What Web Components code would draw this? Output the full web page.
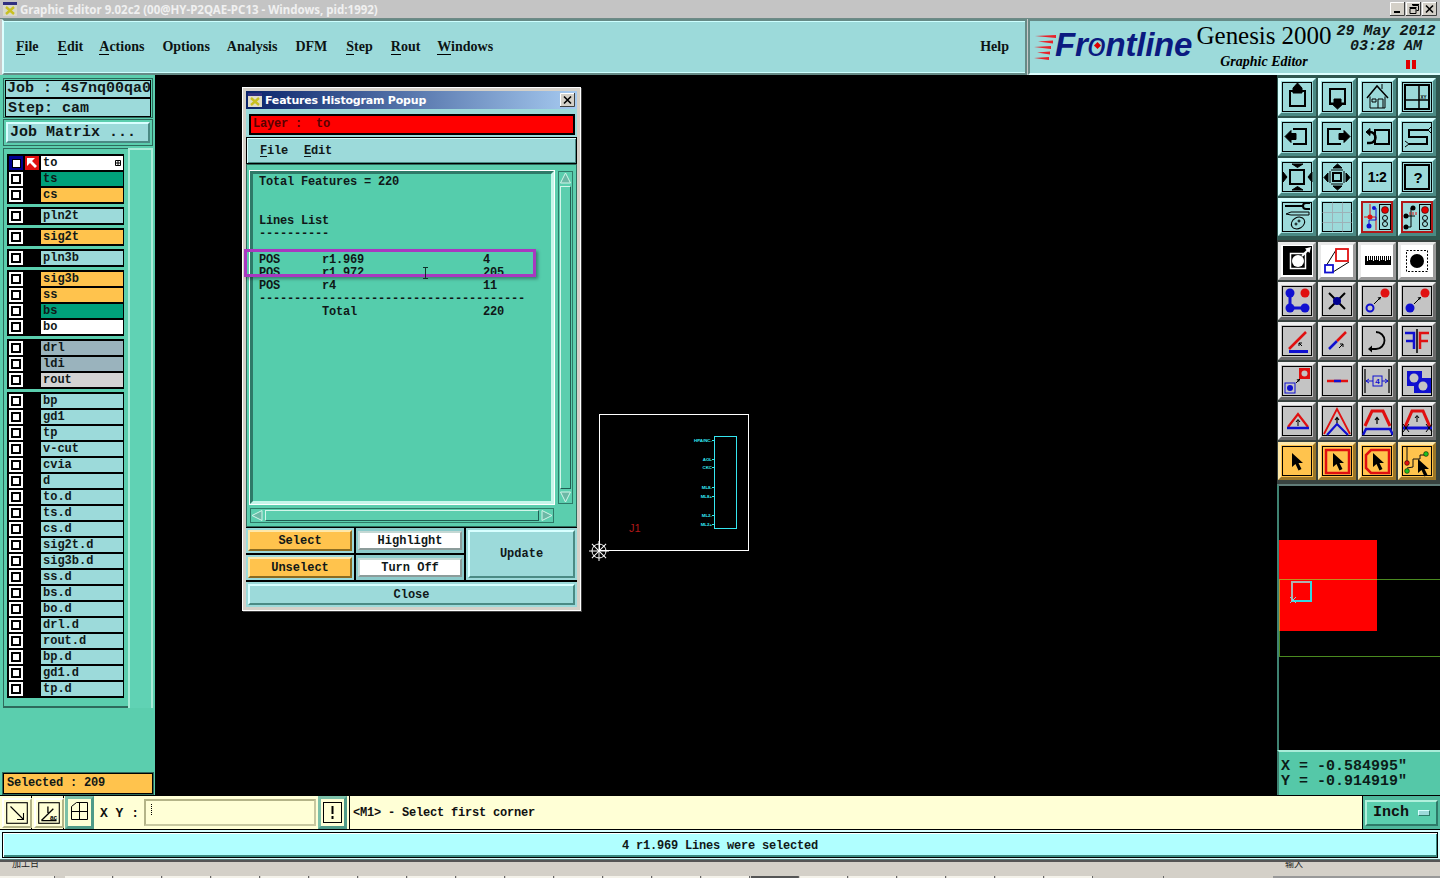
<!DOCTYPE html>
<html>
<head>
<meta charset="utf-8">
<title>Graphic Editor</title>
<style>
  html, body { margin: 0; padding: 0; height: 100%; overflow: hidden; background: #000; }
  body { display: flex; flex-direction: column; width: 1440px; height: 878px; font: bold 12px "Liberation Mono", monospace; }
  .main { display: flex; height: 720px; }
  .top { display: flex; height: 56px; background: #c9c9c9; }
</style>
</head>
<body>
<title-bar></title-bar>
<div class="top">
  <menu-bar></menu-bar>
  <logo-panel></logo-panel>
</div>
<div class="main">
  <left-panel>
    <layer-group>
      <layer-row name="to" color="#fff" active></layer-row>
      <layer-row name="ts" color="#00a07a"></layer-row>
      <layer-row name="cs" color="#ffc34d"></layer-row>
    </layer-group>
    <layer-group><layer-row name="pln2t" color="#9cdada"></layer-row></layer-group>
    <layer-group><layer-row name="sig2t" color="#ffc34d"></layer-row></layer-group>
    <layer-group><layer-row name="pln3b" color="#9cdada"></layer-row></layer-group>
    <layer-group>
      <layer-row name="sig3b" color="#ffc34d"></layer-row>
      <layer-row name="ss" color="#ffc34d"></layer-row>
      <layer-row name="bs" color="#00a07a"></layer-row>
      <layer-row name="bo" color="#fff"></layer-row>
    </layer-group>
    <layer-group>
      <layer-row name="drl" color="#9ab3bd"></layer-row>
      <layer-row name="ldi" color="#9ab3bd"></layer-row>
      <layer-row name="rout" color="#d3d3d3"></layer-row>
    </layer-group>
    <layer-group>
      <layer-row name="bp" color="#9cdada"></layer-row>
      <layer-row name="gd1" color="#9cdada"></layer-row>
      <layer-row name="tp" color="#9cdada"></layer-row>
      <layer-row name="v-cut" color="#9cdada"></layer-row>
      <layer-row name="cvia" color="#9cdada"></layer-row>
      <layer-row name="d" color="#9cdada"></layer-row>
      <layer-row name="to.d" color="#9cdada"></layer-row>
      <layer-row name="ts.d" color="#9cdada"></layer-row>
      <layer-row name="cs.d" color="#9cdada"></layer-row>
      <layer-row name="sig2t.d" color="#9cdada"></layer-row>
      <layer-row name="sig3b.d" color="#9cdada"></layer-row>
      <layer-row name="ss.d" color="#9cdada"></layer-row>
      <layer-row name="bs.d" color="#9cdada"></layer-row>
      <layer-row name="bo.d" color="#9cdada"></layer-row>
      <layer-row name="drl.d" color="#9cdada"></layer-row>
      <layer-row name="rout.d" color="#9cdada"></layer-row>
      <layer-row name="bp.d" color="#9cdada"></layer-row>
      <layer-row name="gd1.d" color="#9cdada"></layer-row>
      <layer-row name="tp.d" color="#9cdada"></layer-row>
    </layer-group>
  </left-panel>
  <graphic-canvas>
    <histogram-popup></histogram-popup>
  </graphic-canvas>
  <right-panel>
    <tool-grid slot="top">
      <tool-button tone="cyan" icon="up"></tool-button>
      <tool-button tone="cyan" icon="down"></tool-button>
      <tool-button tone="cyan" icon="home"></tool-button>
      <tool-button tone="cyan" icon="panes"></tool-button>
      <tool-button tone="cyan" icon="left"></tool-button>
      <tool-button tone="cyan" icon="right"></tool-button>
      <tool-button tone="cyan" icon="undo"></tool-button>
      <tool-button tone="cyan" icon="snake"></tool-button>
      <tool-button tone="cyan" icon="fit"></tool-button>
      <tool-button tone="cyan" icon="zoomout"></tool-button>
      <tool-button tone="cyan" icon="ratio"></tool-button>
      <tool-button tone="cyan" icon="help"></tool-button>
      <tool-button tone="cyan" icon="tools"></tool-button>
      <tool-button tone="cyan" icon="grid"></tool-button>
      <tool-button tone="cyan" icon="pcb1"></tool-button>
      <tool-button tone="cyan" icon="pcb2"></tool-button>
    </tool-grid>
    <tool-grid slot="bottom">
      <tool-button tone="white" icon="snap"></tool-button>
      <tool-button tone="white" icon="squares"></tool-button>
      <tool-button tone="white" icon="ruler"></tool-button>
      <tool-button tone="white" icon="dashed"></tool-button>
      <tool-button tone="gray" icon="dots"></tool-button>
      <tool-button tone="gray" icon="cross"></tool-button>
      <tool-button tone="gray" icon="ring"></tool-button>
      <tool-button tone="gray" icon="ball"></tool-button>
      <tool-button tone="gray" icon="angle"></tool-button>
      <tool-button tone="gray" icon="diag"></tool-button>
      <tool-button tone="gray" icon="arc"></tool-button>
      <tool-button tone="gray" icon="flip"></tool-button>
      <tool-button tone="gray" icon="pads"></tool-button>
      <tool-button tone="gray" icon="bar"></tool-button>
      <tool-button tone="gray" icon="dim"></tool-button>
      <tool-button tone="gray" icon="blob"></tool-button>
      <tool-button tone="gray" icon="tri"></tool-button>
      <tool-button tone="gray" icon="peak"></tool-button>
      <tool-button tone="gray" icon="trap"></tool-button>
      <tool-button tone="gray" icon="trapx"></tool-button>
      <tool-button tone="orange" icon="arrow"></tool-button>
      <tool-button tone="orange" icon="sqarrow"></tool-button>
      <tool-button tone="orange" icon="octarrow"></tool-button>
      <tool-button tone="orange" icon="netarrow"></tool-button>
    </tool-grid>
  </right-panel>
</div>
<command-bar></command-bar>
<status-bar>4 r1.969 Lines were selected</status-bar>
<task-strip></task-strip>

<script>
const FONT_MONO = '"Liberation Mono", monospace';

// tiny helper, every element here is just markup + styles in an open root
class ShadowBox extends HTMLElement {
  constructor() {
    super();
    this._sR = this.attachShadow({ mode: "open" });
  }
  paint(css, html) {
    this._sR.innerHTML = `<style>${css}</style>${html}`;
  }
}

class TitleBar extends ShadowBox {
  connectedCallback() {
    this.paint(`
      :host { display: flex; align-items: center; height: 18px; background: #c4c4c4; color: #f0f0f0;
        font: bold 11.5px "Noto Sans", sans-serif; border-bottom: 1px solid #6f8a86; box-sizing: content-box; }
      svg.app { margin: 0 3px 0 3px; }
      span { flex: 1; white-space: nowrap; }
      .btns { display: flex; gap: 1px; margin-right: 3px; }
      .btns svg { display: block; }
    `, `
      <svg class="app" width="14" height="14" viewBox="0 0 14 14"><rect width="14" height="14" fill="#d8d8c8"/><rect width="14" height="3" fill="#303080"/><path d="M3 5l8 7M11 5l-8 7" stroke="#c8c020" stroke-width="2.4"/></svg>
      <span>Graphic Editor 9.02c2 (00@HY-P2QAE-PC13 - Windows, pid:1992)</span>
      <div class="btns">
        ${[ '<path d="M4 10h6" stroke="#000" stroke-width="2"/>',
            '<path d="M6.5 3.5h6v5h-2M4 6.500h6v5h-6z" fill="none" stroke="#000"/><path d="M6 2.500h7M3.500 5.500h7" stroke="#000"/>',
            '<path d="M4 3.500l7 7M11 3.500l-7 7" stroke="#000" stroke-width="1.600"/>' ]
          .map(g => `<svg width="15" height="14" viewBox="0 0 15 14"><rect width="15" height="14" fill="#d4d0c8"/><path d="M.5 14V.5H15" stroke="#fff" fill="none"/><path d="M14.500 0V13.500H0" stroke="#404040" fill="none"/>${g}</svg>`).join("")}
      </div>`);
  }
}

class MenuBar extends ShadowBox {
  connectedCallback() {
    const items = [["File", 1], ["Edit", 1], ["Actions", 1], ["Options", 0], ["Analysis", 0],
      ["DFM", 0], ["Step", 1], ["Rout", 1], ["Windows", 1]];
    const gapFor = [0, 19, 16, 18, 17, 18, 19, 18, 17];
    this.paint(`
      :host { display: flex; align-items: center; box-sizing: border-box; width: 1025px; margin-left: 2px; height: 56px; flex: none;
        background: #9cdada; border: 2px solid; border-color: #668a86 #668a86 #668a86 #dff; padding: 0 16px 0 12px;
        box-shadow: inset 0 -1px 0 #cff, inset 0 1px 0 #cff;
        font: bold 14px "Liberation Serif", serif; color: #0c1414; }
      nav { display: flex; flex: 1; }
      b { font-weight: bold; }
      u { text-decoration: none; border-bottom: 1px solid #000; }
    `, `
      <nav>${items.map((m, i) => `<b style="margin-left:${gapFor[i]}px">${m[1] ? `<u>${m[0][0]}</u>${m[0].slice(1)}` : m[0]}</b>`).join("")}</nav>
      <b>Help</b>`);
  }
}

class LogoPanel extends ShadowBox {
  connectedCallback() {
    this.paint(`
      :host { display: flex; box-sizing: border-box; flex: 1; height: 56px; background: #9cdada; color: #000; margin-left: 1px;
        border: 2px solid #668a86; border-bottom-color: #dff; border-right: 0; padding: 0 0 0 4px; white-space: nowrap; }
      .stripes { margin-top: 14px; flex: none; }
      .front { font: italic bold 33px "Liberation Sans", sans-serif; color: #0b1a80; letter-spacing: -.25px; margin: 5px 0 0 -1px; width: 140px; flex: none; }
      .front i { position: relative; font-weight: normal; }
      .front i::after { content: ""; position: absolute; left: 7px; top: 17px; width: 5px; height: 5px; background: #e00000; transform: rotate(45deg); }
      .mid { width: 138px; text-align: center; flex: none; }
      .gen { font: 25px/28px "Liberation Serif", serif; margin-top: 1px; letter-spacing: -.05px; }
      .ge { font: italic bold 14px/16px "Liberation Serif", serif; margin-top: 4px; }
      .date { font: italic bold 15px/15px ${FONT_MONO}; text-align: center; width: 106px; margin-top: 3px; color: #101818; flex: none; }
      .pause { display: flex; justify-content: center; gap: 2px; margin: 6px 0 0 50px; }
      .pause s { display: block; width: 4px; height: 9px; background: #e00000; }
    `, `
      <svg class="stripes" width="22" height="26" viewBox="0 0 22 26">
        <path d="M1 1l21-1v3zM4 6.500l15-1v3zM0 12l17-1v3zM3 17.500l13-1v3zM0 23l15-1v3z" fill="#e8222a"/>
      </svg>
      <div class="front">Fr<i>o</i>ntline</div>
      <div class="mid"><div class="gen">Genesis 2000</div><div class="ge">Graphic Editor</div></div>
      <div class="date">29 May 2012<br>03:28 AM<div class="pause"><s></s><s></s></div></div>`);
  }
}

class LayerRow extends ShadowBox {
  connectedCallback() {
    const active = this.hasAttribute("active");
    this.paint(`
      :host { display: flex; height: 16px; font: bold 12px/14px ${FONT_MONO}; color: #101818; }
      .chk { box-sizing: border-box; width: 14px; height: 14px; background: #000; border: 2px solid #fff; display: grid; place-items: center; }
      .chk::after { content: ""; width: 6px; height: 6px; background: #fff; }
      .chk.on { border: 3px solid #000090; background: #000090; }
      .chk.on::after { width: 7px; height: 7px; background: #fff; box-shadow: 0 0 0 1px #000; }
      .mark { width: 14px; height: 14px; margin: 0 2px; display: block; }
      .fill { flex: 1; height: 14px; padding-left: 2px; margin-right: 1px; display: flex; justify-content: space-between; }
      .fill svg { margin: 4px 2px 0 0; }
    `, `
      <span class="chk ${active ? "on" : ""}"></span>
      ${active
        ? `<svg class="mark" viewBox="0 0 14 14"><rect width="14" height="14" fill="#e01010"/><path d="M2 2h8l-3 3 5 5-2 2-5-5-3 3z" fill="#fff"/></svg>`
        : `<span class="mark"></span>`}
      <span class="fill" style="background:${this.getAttribute("color")}">${this.getAttribute("name")}${active
        ? `<svg width="6" height="6" viewBox="0 0 6 6"><path d="M.5.500h5v5h-5zM3 .500v5M.5 3h5" fill="none" stroke="#000"/></svg>` : ""}</span>`);
  }
}

class LayerGroup extends ShadowBox {
  connectedCallback() {
    this.paint(`:host { display: block; background: #000; padding: 2px 0 0 2px; margin-bottom: 3px; }`, `<slot></slot>`);
  }
}

class LeftPanel extends ShadowBox {
  connectedCallback() {
    this.paint(`
      :host { display: flex; flex-direction: column; width: 155px; background: #5bceae; box-sizing: border-box; flex: none; color: #101818; }
      .job { margin: 3px 2px 0 3px; background: #5bceae; border: 1px solid #2e6a5c; padding: 1px 1px 0; font: bold 15px/16px ${FONT_MONO}; white-space: pre; }
      .job div { background: #9cdada; border: 1px solid #000; height: 16px; padding-left: 1px; overflow: hidden; }
      .job div + div { height: 17px; margin-top: 0; padding-left: 2px; line-height: 19px; }
      .matrix { margin: 1px 2px 0 3px; border: 1px solid #2e6a5c; padding: 2px; height: 21px; background: #5bceae; }
      .matrix div { height: 21px; box-sizing: border-box; background: #9cdada; border: 2px solid; border-color: #d8ffff #4a8a84 #4a8a84 #d8ffff;
        font: bold 15px/17px ${FONT_MONO}; padding-left: 2px; white-space: pre; }
      .list { display: flex; margin: 2px 2px 0 0; flex: none; }
      .layers { box-sizing: border-box; width: 125px; margin-left: 3px; padding: 5px 4px 5px 3px; border: 1px solid #2e6a5c; border-width: 1px 0 2px 1px; background: #5bceae; }
      .track { flex: 1; background: #60d2b4; border: 2px solid #a8ecd8; border-bottom: 0; }
      .spacer { flex: 1; }
      .selected { margin: 0 2px 1px 3px; box-sizing: border-box; height: 21px; border: 1px solid #000; outline: 1px solid #2e6a5c; background: #ffc34d;
        font: bold 12px/19px ${FONT_MONO}; padding-left: 3px; letter-spacing: -.2px; white-space: pre; }
    `, `
      <div class="job"><div>Job : 4s7nq00qa0</div><div>Step: cam</div></div>
      <div class="matrix"><div>Job Matrix ...</div></div>
      <div class="list"><div class="layers"><slot></slot></div><div class="track"></div></div>
      <div class="spacer"></div>
      <div class="selected">Selected : 209</div>`);
  }
}

class GraphicCanvas extends ShadowBox {
  connectedCallback() {
    const pins = [["HPA/NC-", 440], ["AOL", 459], ["CKC", 467], ["ML8-", 487], ["ML8+", 496], ["ML2-", 515], ["ML2+", 524]];
    const spokes = [0, 45, 90, 135].map(a => `<line x1="-10" x2="10" transform="rotate(${a})"/>`).join("");
    this.paint(`
      :host { display: block; position: relative; flex: 1; background: #000; }
      svg { position: absolute; left: 0; top: 0; width: 100%; height: 100%; }
      text { font: bold 4.400px "Liberation Sans", sans-serif; fill: #35f0f8; text-anchor: end; }
      text.j { font: 11px "Liberation Sans", sans-serif; fill: #b01818; text-anchor: start; }
    `, `
      <svg viewBox="155 75 1122 720">
        <rect x="599.500" y="414.500" width="149" height="136" fill="none" stroke="#fff"/>
        <rect x="714.500" y="436.500" width="22" height="92" fill="none" stroke="#35e6f0"/>
        ${pins.map(p => `<text x="712" y="${p[1] + 2}">${p[0]}</text><line x1="712" x2="714" y1="${p[1]}.500" y2="${p[1]}.500" stroke="#35e6f0"/>`).join("")}
        <text class="j" x="629" y="532">J1</text>
        <g transform="translate(599 551)" fill="none" stroke="#fff"><circle r="7"/>${spokes}</g>
      </svg>
      <slot></slot>`);
  }
}

class ScrollBar extends ShadowBox {
  connectedCallback() {
    const v = this.getAttribute("orient") === "v";
    const arrow = d => `<svg width="15" height="15" viewBox="0 0 15 15"><path d="${d}" fill="#6db8a6" stroke="#d2f6ea"/></svg>`;
    this.paint(`
      :host { display: flex; flex-direction: ${v ? "column" : "row"}; ${v ? "width" : "height"}: 15px; background: #5bceae;
        outline: 1px solid #2e7a68; outline-offset: -1px; }
      svg { display: block; flex: none; }
      .thumb { flex: 1; margin: ${v ? "0 2px" : "2px 0"}; border: 1px solid #1f5e52; border-color: #d2f6ea #1f5e52 #1f5e52 #d2f6ea; background: #5bceae; }
    `, v
      ? arrow("M7.500 2l5 10h-10z") + `<div class="thumb"></div>` + arrow("M7.500 13l5-10h-10z")
      : arrow("M2 7.500l10-5v10z") + `<div class="thumb"></div>` + arrow("M13 7.500l-10-5v10z"));
  }
}

class MotifButton extends ShadowBox {
  connectedCallback() {
    const tone = this.getAttribute("tone") || "cyan";
    const t = { cyan: ["#9cdada", "#d8ffff", "#4a8a84"], orange: ["#ffc34d", "#ffe8a8", "#8a6a20"], white: ["#fff", "#c4d8d4", "#8c9c9a"] }[tone];
    this.paint(`
      :host { display: flex; align-items: center; justify-content: center; box-sizing: border-box; height: 100%;
        background: ${t[0]}; border: 2px solid; border-color: ${t[1]} ${t[2]} ${t[2]} ${t[1]}; font: bold 12px ${FONT_MONO}; color: #101818; white-space: pre; }
    `, `<slot></slot>`);
  }
}

class HistogramPopup extends ShadowBox {
  connectedCallback() {
    const report = `Total Features = 220


Lines List
----------

POS      r1.969                 4
POS      r1.972                 205
POS      r4                     11
--------------------------------------
         Total                  220`;
    this.paint(`
      :host { position: absolute; left: 87px; top: 12px; width: 339px; height: 524px; box-sizing: border-box; display: flex; flex-direction: column;
        background: #d4d0c8; border: 4px solid #d4d0c8; outline: 1px solid #fff; outline-offset: -1px;
        box-shadow: 1px 1px 0 #404040; color: #101818; }
      .title { display: flex; align-items: center; height: 18px; flex: none; background: linear-gradient(90deg, #0a246a, #a6caf0); color: #fff;
        font: bold 11px "DejaVu Sans", sans-serif; letter-spacing: -.2px; }
      .title svg { display: block; flex: none; }
      .title span { flex: 1; margin-left: 3px; }
      .layer { flex: none; height: 28px; box-sizing: border-box; background: #9cdada; padding: 5px 2px 2px 3px; }
      .layer div { height: 21px; box-sizing: border-box; background: #ff0000; border: 2px solid #000; font: bold 12px/17px ${FONT_MONO}; color: #5a0000; white-space: pre; padding-left: 2px; letter-spacing: -.2px; }
      .menu { flex: none; height: 27px; box-sizing: border-box; background: #9cdada; border: 1px solid #000; box-shadow: inset 1px 1px 0 #d8ffff, inset -1px -1px 0 #4a8a84;
        display: flex; align-items: center; gap: 16px; padding-left: 13px; font: bold 12px ${FONT_MONO}; letter-spacing: -.2px; }
      .menu u { text-decoration-thickness: 1px; text-underline-offset: 2px; }
      .body { flex: none; height: 363px; box-sizing: border-box; background: #5bceae; padding: 6px 3px 3px 3px; border: 1px solid #2e6a5c;
        display: grid; grid-template-columns: 304px 15px; grid-template-rows: 333px 15px; gap: 4px; }
      pre { margin: 0; box-sizing: border-box; background: #55cdac; border: 3px solid; border-color: #2e7a68 #c6f6ea #c6f6ea #2e7a68; outline: 1px solid #fff;
        padding: 2px 0 0 6px; font: bold 12px/13px ${FONT_MONO}; letter-spacing: -.2px; overflow: hidden; }
      .btns { flex: none; display: grid; grid-template-columns: 108px 108px 1fr; grid-template-rows: 25px 25px 25px; gap: 2px; background: #000; padding-top: 1px; height: 80px; box-sizing: border-box; }
      .btns > div { background: #9cdada; padding: 2px; box-sizing: border-box; }
      .btns > .w { padding: 3px 2px; background: #8ccaca; }
      .upd { grid-column: 3; grid-row: 1 / span 2; }
      .cl { grid-column: 1 / span 3; }
      .mark { position: absolute; left: -2px; top: 158px; width: 292px; height: 28px; box-sizing: border-box; border: 3px solid #a838c0;
        box-shadow: 2px 2px 3px rgba(0,0,0,.35); }
      .beam { position: absolute; left: 176px; top: 176px; }
    `, `
      <div class="title">
        <svg width="14" height="14" viewBox="0 0 14 14" style="margin-left:2px"><rect width="14" height="14" fill="#e0dcc8"/><rect width="14" height="3" fill="#303080"/><path d="M3 5l8 7M11 5l-8 7" stroke="#c8c020" stroke-width="2.400"/></svg>
        <span>Features Histogram Popup</span>
        <svg width="15" height="14" viewBox="0 0 15 14" style="margin-right:2px"><rect width="15" height="14" fill="#d4d0c8"/><path d="M.5 14V.5H15" stroke="#fff" fill="none"/><path d="M14.500 0V13.500H0" stroke="#404040" fill="none"/><path d="M4 3.500l7 7M11 3.500l-7 7" stroke="#000" stroke-width="1.600"/></svg>
      </div>
      <div class="layer"><div>Layer :  to</div></div>
      <div class="menu"><span><u>F</u>ile</span><span><u>E</u>dit</span></div>
      <div class="body">
        <pre>${report}</pre>
        <scroll-bar orient="v"></scroll-bar>
        <scroll-bar orient="h"></scroll-bar>
      </div>
      <div class="btns">
        <div><motif-button tone="orange">Select</motif-button></div>
        <div class="w"><motif-button tone="white">Highlight</motif-button></div>
        <div class="upd"><motif-button>Update</motif-button></div>
        <div><motif-button tone="orange">Unselect</motif-button></div>
        <div class="w"><motif-button tone="white">Turn Off</motif-button></div>
        <div class="cl"><motif-button>Close</motif-button></div>
      </div>
      <div class="mark"></div>
      <svg class="beam" width="7" height="12" viewBox="0 0 7 12"><path d="M1 .5h5M1 11.500h5M3.500 0v12" stroke="#10322c" fill="none"/></svg>`);
  }
}

const R = "#e01010", B = "#1010d0";
const ptr = (x, y) => `<path transform="translate(${x} ${y})" d="M0 0v14l3.500-3 3 6.500 3-1.500-3-6h4.500z" fill="#000" stroke="none"/>`;
const tiny = (x1, y1, x2, y2) => `<path d="M${x1} ${y1}L${x2} ${y2}" stroke="#000"/><path d="M${x2} ${y2}l-3.500 .5 2.500 2.500z" fill="#000" stroke="none"/>`;
const signal = `<rect x="21.500" y="6.500" width="11" height="25" fill="#9cdada" stroke="#000"/><circle cx="27" cy="12" r="3.500" fill="#e00000" stroke="#000" stroke-width=".5"/><circle cx="27" cy="20" r="2.500"/><circle cx="27" cy="26" r="2.500"/>`;
const redFrame = `<rect x="3.500" y="3.500" width="31" height="31" fill="none" stroke="#b01818" stroke-width="3"/>`;
const ICONS = {
  up: `<rect x="12" y="13" width="15" height="15" stroke-width="2"/><path d="M19.500 5l4.500 5v5h-9v-5z" fill="#000"/>`,
  down: `<rect x="12" y="11" width="15" height="15" stroke-width="2"/><path d="M16 21h7v4h3l-6.500 6-6.500-6h3z" fill="#000"/>`,
  home: `<path d="M24 6v5"/><path d="M12 18.500V30h15V18.500M20 30v-9h5v9M14 21h4v3h-4z"/><path d="M9 20L19 8l11 12" stroke-width="1.500"/>`,
  panes: `<rect x="7" y="7" width="24" height="24" stroke-width="2"/><path d="M21 7v24M7 22h24" stroke-width="1.500"/><text x="22.500" y="20.500" font-size="4.500" font-family="Liberation Sans" fill="#000" stroke="none">XY</text>`,
  left: `<path d="M15 11h13v15H15" stroke-width="2"/><path d="M7 18.500l6-6v3h5v6h-5v3z" fill="#000"/>`,
  right: `<path d="M23 11H10v15h13" stroke-width="2"/><path d="M32 18.500l-6-6v3h-5v6h5v3z" fill="#000"/>`,
  undo: `<rect x="17" y="12" width="14" height="14" stroke-width="2"/><path d="M11 14h1a5.500 5.500 0 010 11H9" stroke-width="2.500"/><path d="M8 14l4-3.500v7z" fill="#000"/>`,
  snake: `<path d="M30 12H11v7h18v7H11" stroke-width="2"/><path d="M30 12l3-3M30 12l3 3M11 26l-4-3M11 26l-4 3"/>`,
  fit: `<rect x="12" y="12" width="14" height="14" stroke-width="2"/><path d="M14 6h11l-5.500 3.500zM14 32h11l-5.500-3.500zM5 14v10l4-5zM34 14v10l-4-5z" fill="#000"/>`,
  zoomout: `<rect x="15" y="15" width="8" height="8" stroke-width="2"/><path d="M15 10h9l-4.500-4zM15 28h9l-4.500 4zM10 15v9l-4-4.500zM28 15v9l4-4.500z" fill="#000"/><path d="M13 12h12M13 26h12M12 13v12M26 13v12"/>`,
  ratio: `<text x="19" y="24" text-anchor="middle" font-size="14" font-weight="bold" font-family="Liberation Sans" fill="#000" stroke="none" letter-spacing="-.5">1:2</text>`,
  help: `<rect x="7" y="7" width="24" height="24" stroke-width="2"/><text x="20" y="25" text-anchor="middle" font-size="15" font-weight="bold" font-family="Liberation Sans" fill="#000" stroke="none">?</text>`,
  tools: `<path d="M7 8h18" stroke-width="2"/><path d="M32 5h-4a3 3 0 000 6h4" stroke-width="2"/><path d="M8 16l5-2h18v3H13z"/><ellipse cx="20" cy="25" rx="7" ry="5.500" transform="rotate(-30 20 25)"/><circle cx="18" cy="26" r="1"/><circle cx="21" cy="23" r="1"/>`,
  grid: `<path d="M4.500 14.500h29M4.500 24.500h29M14.500 4.500v29M24.500 4.500v29" stroke="#9db2b8"/>`,
  pcb1: `${redFrame}<path d="M6 19h12v13M12 6v13" stroke="#e01010"/><path d="M18 10v12H11v6" stroke="#1010d0"/><circle cx="12" cy="19" r="2.500" fill="${R}" stroke="none"/><circle cx="16" cy="10" r="2" fill="${B}" stroke="none"/><circle cx="11" cy="28" r="2.500" fill="${B}" stroke="none"/>${signal}`,
  pcb2: `${redFrame}<path d="M13 10v19H8M8 18h9" stroke="#000"/><path d="M12 17v-3M15 17v-3M18 17v-3" stroke="#e01010"/><circle cx="15" cy="10" r="2.500" fill="#000" stroke="none"/><circle cx="8" cy="18" r="2.500" fill="#000" stroke="none"/><circle cx="8" cy="29" r="2.500" fill="#000" stroke="none"/>${signal}`,
  snap: `<rect x="5" y="4" width="29" height="29" fill="#000" stroke="none"/><rect x="12.500" y="11.500" width="15" height="15" stroke="#fff" stroke-width="1.500"/><circle cx="20" cy="19" r="6" fill="#fff" stroke="none"/><path d="M24 14L31 7" stroke="#fff" stroke-width="2"/><path d="M33 5l-6 1.500 4.500 4.500z" fill="#fff" stroke="none"/>`,
  squares: `<path d="M8 24L18 8M15 30l16-10"/><rect x="7" y="23" width="8" height="7.500" stroke="${B}" stroke-width="1.800" fill="#fff"/><rect x="18" y="7" width="12" height="12" stroke="${R}" stroke-width="1.800" fill="#fff"/>`,
  ruler: `<rect x="7" y="14" width="26" height="9" fill="#000" stroke="none"/><path d="M9.500 14v5M11.500 14v4M13.500 14v4M15.500 14v5M17.500 14v4M19.500 14v4M21.500 14v5M23.500 14v4M25.500 14v4M27.500 14v5M29.500 14v4M31.500 14v4" stroke="#fff"/>`,
  dashed: `<rect x="8.500" y="8.500" width="21" height="21" stroke-dasharray="2 1.500"/><circle cx="19" cy="19" r="7" fill="#000" stroke="none"/>`,
  dots: `<path d="M12 11v15h15" stroke="${B}" stroke-width="3"/><circle cx="12" cy="11" r="4.500" fill="${B}" stroke="none"/><circle cx="12" cy="26" r="4.500" fill="${B}" stroke="none"/><circle cx="27" cy="26" r="4.500" fill="${B}" stroke="none"/><circle cx="27" cy="11" r="4.500" fill="${R}" stroke="none"/>`,
  cross: `<path d="M11 11l16 16M27 11L11 27" stroke-width="2"/><circle cx="19" cy="19" r="4" fill="#000090" stroke="none"/>`,
  ring: `<circle cx="12" cy="26" r="3.500" stroke="${B}" stroke-width="2"/>${tiny(16, 22, 23, 15)}<circle cx="27" cy="11" r="4.500" fill="${R}" stroke="none"/>`,
  ball: `<circle cx="12" cy="26" r="4.500" fill="${B}" stroke="none"/>${tiny(16, 22, 23, 15)}<circle cx="27" cy="11" r="4.500" fill="${R}" stroke="none"/>`,
  angle: `<path d="M11 27L28 10" stroke="${R}" stroke-width="2.500"/><path d="M11 29.500h19" stroke="${B}" stroke-width="3"/><path d="M24 24l-3-3M21 21v3M21 21h3"/>`,
  diag: `<path d="M11 27l8-8" stroke="${B}" stroke-width="2.500"/><path d="M19 19l9-9" stroke="${R}" stroke-width="2.500"/><path d="M21 26l4-4M25 22h-3M25 22v3"/>`,
  arc: `<path d="M18 10a8 8 0 010 17h-4" stroke-width="1.800"/><path d="M14 23.500v7l-4-3.500z" fill="#000" stroke="none"/>`,
  flip: `<path d="M19 7v24" stroke-width="1.500"/><path d="M22 27V11h9M22 19h8" stroke="${R}" stroke-width="2.500"/><path d="M16 27V11H7M16 19H8" stroke="${B}" stroke-width="2.500"/>`,
  pads: `<rect x="21" y="6" width="11" height="11" fill="${R}" stroke="none"/><circle cx="26.500" cy="11.500" r="3" fill="#c4c4c4" stroke="none"/><rect x="7" y="21" width="10" height="10" stroke="${B}"/><circle cx="12" cy="26" r="3" fill="${B}" stroke="none"/>${tiny(18, 21, 22, 17)}`,
  bar: `<path d="M9 19h21" stroke="${R}" stroke-width="2.500"/><path d="M16 19h7" stroke="${B}" stroke-width="2.500"/>`,
  dim: `<path d="M7 7v24M31 7v24" stroke-width="1.200"/><path d="M8 19h22M8 19l3-2M8 19l3 2M30 19l-3-2M30 19l-3 2" stroke="${B}"/><rect x="15" y="14" width="9" height="10" fill="#c4c4c4" stroke="${B}"/><text x="19.500" y="22" text-anchor="middle" font-size="8" font-family="Liberation Sans" fill="${B}" stroke="none">4</text>`,
  blob: `<path d="M9 9h15v7h9v15H16v-7H9z" fill="${B}" stroke="none"/><circle cx="16" cy="16" r="4.500" fill="#c4c4c4" stroke="none"/><circle cx="25" cy="24" r="4.500" fill="#c4c4c4" stroke="none"/>`,
  tri: `<path d="M10 25L20 12l10 13" stroke="${R}" stroke-width="2.200"/><path d="M9 26h22" stroke="${B}" stroke-width="2.500"/><path d="M20 24v-6M18 20l2-2.500 2 2.500"/>`,
  peak: `<path d="M6 32L19 7l13 25" stroke="${R}" stroke-width="1.800"/><path d="M9 33l10-11 11 11" stroke="${B}" stroke-width="2.200"/><path d="M19 21v-5M17 18l2-2.500 2 2.500" stroke-width="1.200"/>`,
  trap: `<path d="M7 24l7-15h11l7 15" stroke="${R}" stroke-width="3"/><path d="M5 33l3-6h24l3 6" stroke="${B}" stroke-width="2.500"/><path d="M19 22v-6M17 18l2-2.500 2 2.500" stroke-width="1.200"/>`,
  trapx: `<path d="M7 25l7-16h11l7 16" stroke="${R}" stroke-width="3"/><path d="M5 26h29" stroke="${B}" stroke-width="3"/><path d="M5 22l6 8M11 22l-6 8M28 22l6 8M34 22l-6 8M19 20v-6M17 16l2-2.500 2 2.500"/>`,
  arrow: ptr(14, 11),
  sqarrow: `<rect x="8" y="8" width="23" height="23" stroke="${R}" stroke-width="2.500"/>${ptr(15, 11)}`,
  octarrow: `<path d="M13 8h18v23H13l-5-5V13z" stroke="${R}" stroke-width="2.500"/>${ptr(15, 11)}`,
  netarrow: `<path d="M9 5v15h0M9 26l6-1v-8h7v-4h6" stroke="#111"/><circle cx="9" cy="21" r="2.400" fill="${R}" stroke="#000" stroke-width=".5"/><circle cx="9" cy="29" r="2.400" fill="#20c020" stroke="#000" stroke-width=".5"/><circle cx="28" cy="12" r="2.400" fill="#20c020" stroke="#000" stroke-width=".5"/>${ptr(20, 17)}`,
};
const TONES = {
  cyan: ["#9cdada", "#d8ffff", "#4a8a84"],
  gray: ["#c4c4c4", "#f0f0f0", "#6a6a6a"],
  orange: ["#ffc34d", "#ffe8a8", "#9a7628"],
  white: ["#fff", "#e8e8e8", "#9a9a9a"],
};

class ToolButton extends ShadowBox {
  connectedCallback() {
    const t = TONES[this.getAttribute("tone")];
    const icon = this.getAttribute("icon");
    const frame = (icon === "snap" || icon === "squares" || icon === "ruler" || icon === "dashed" || icon.startsWith("pcb")) ? ""
      : `<rect x="4.500" y="4.500" width="29" height="29" stroke="#000"/>`;
    this.paint(`
      :host { display: block; width: 38px; height: 38px; box-sizing: border-box; background: ${t[0]}; border: 3px solid; border-color: ${t[1]} ${t[2]} ${t[2]} ${t[1]}; }
      svg { display: block; }
    `, `<svg width="32" height="32" viewBox="3 3 32 32" fill="none" stroke="#000">${frame}${ICONS[icon]}</svg>`);
  }
}

class ToolGrid extends ShadowBox {
  connectedCallback() {
    this.paint(`:host { display: grid; grid-template-columns: repeat(4, 38px); gap: 2px; padding: 0 0 0 1px; }`, `<slot></slot>`);
  }
}

class RightPanel extends ShadowBox {
  connectedCallback() {
    this.paint(`
      :host { display: flex; flex-direction: column; width: 163px; flex: none; background: #2f5750; box-sizing: border-box; font: bold 15px/15px ${FONT_MONO}; color: #0c1c18; }
      .a { padding: 3px 0 4px 0; background: #2f5750; }
      .b { padding: 2px 0 4px 0; background: #38423f; }
      .map { display: block; height: 266px; background: #000; border-left: 2px solid #3f8272; border-top: 2px solid #607c78; box-sizing: border-box; flex: none; }
      .xy { flex: 1; background: #55c8a8; border-top: 2px solid #a8ecd8; border-left: 2px solid #3f8272; padding: 7px 0 0 2px; white-space: pre; }
    `, `
      <div class="a"><slot name="top"></slot></div>
      <div class="b"><slot name="bottom"></slot></div>
      <svg class="map" width="163" viewBox="1279 486 161 264" preserveAspectRatio="none">
        <rect x="1279" y="540" width="98" height="91" fill="#ff0000"/>
        <path d="M1279 579.500H1440M1279 656.500H1440M1279.500 579V657" stroke="#4a8a20" fill="none"/>
        <path d="M1279 579.500h98M1279.500 579v52" stroke="#c09020" fill="none"/>
        <path d="M1292 601v-19h19" stroke="#b0b0b0" stroke-width="2" fill="none"/>
        <path d="M1311 581v20h-19" stroke="#35d6e0" stroke-width="2" fill="none"/>
        <path d="M1290 597l6 6M1296 597l-6 6" stroke="#7ad6e0"/>
      </svg>
      <div class="xy">X = -0.584995"
Y = -0.914919"</div>`);
  }
}

class CommandBar extends ShadowBox {
  connectedCallback() {
    const box = `<rect x="5.500" y="5.500" width="19" height="19" fill="none" stroke="#000"/>`;
    this.paint(`
      :host { display: flex; height: 35px; box-sizing: border-box; background: #ffffd6; border-top: 1px solid #000; border-bottom: 1px solid #000; color: #101010; font: bold 12px ${FONT_MONO}; letter-spacing: -.2px; white-space: pre; }
      .ib { width: 31px; margin-left: 1px; border-right: 1px solid #000; box-sizing: border-box; padding: 2px 1px 0 1px; flex: none; }
      .ib svg { display: block; border: 2px solid; border-color: #fff #b4b488 #b4b488 #fff; }
      .teal { flex: none; box-sizing: border-box; width: 29px; height: 33px; background: #ffffd6; border: 3px solid; border-color: #7cc0a8 #4f9a88 #4f9a88 #7cc0a8; }
      .teal svg { display: block; }
      .xy { width: 44px; padding: 10px 0 0 4px; font-size: 13px; letter-spacing: 0; flex: none; box-sizing: content-box; }
      .input { flex: none; box-sizing: border-box; width: 172px; height: 27px; margin: 3px 2px 0 0; background: #ffffd6; border: 2px solid; border-color: #b4b488 #c8c8a0 #c8c8a0 #b4b488; }
      .input i { display: block; width: 0; height: 11px; margin: 3px 0 0 5px; border-left: 1px dotted #000; }
      .msg { flex: 1; padding: 10px 0 0 3px; border-left: 1px solid #000; margin-left: 2px; }
      .inch { flex: none; width: 78px; border-left: 1px solid #000; background: #4fb89c; padding: 2px; box-sizing: border-box; }
      .inch div { height: 26px; margin-top: 2px; box-sizing: border-box; background: #5bceae; border: 2px solid; border-color: #b0f0dc #2e7a68 #2e7a68 #b0f0dc; display: flex; align-items: center; justify-content: space-between;
        font: bold 15px ${FONT_MONO}; letter-spacing: 0; padding: 0 6px 1px 6px; }
      .inch s { display: block; width: 12px; height: 6px; background: #9cdada; border: 1px solid; border-color: #d8ffff #2e7a68 #2e7a68 #d8ffff; box-sizing: border-box; }
    `, `
      <div class="ib"><svg width="26" height="26" viewBox="3 3 24 24" style="box-sizing:content-box">${box}<path d="M9 9l12 12M21 15v6h-6M9 9" fill="none" stroke="#000"/></svg></div>
      <div class="ib"><svg width="26" height="26" viewBox="3 3 24 24">${box}<path d="M8 22l11-11M8 22h14M14 9v6" fill="none" stroke="#000" stroke-width="1.200"/><text x="16" y="21" font-size="6" font-family="Liberation Sans" fill="#000">ac</text></svg></div>
      <div class="teal" style="margin:0 2px 0 1px"><svg width="23" height="27" viewBox="0 0 23 27"><path d="M3.500 7.500l5-4h11v17h-16zM3.500 12.500h16M11.500 3.500v17" fill="none" stroke="#000"/></svg></div>
      <div class="xy">X Y :</div>
      <div class="input"><i></i></div>
      <div class="teal"><svg width="23" height="27" viewBox="0 0 23 27"><rect x="2.500" y="3.500" width="18" height="20" fill="none" stroke="#000"/><path d="M11.500 7v8" stroke="#000" stroke-width="2"/><rect x="10.500" y="17" width="2" height="3"/></svg></div>
      <div class="msg">&lt;M1&gt; - Select first corner</div>
      <div class="inch"><div>Inch<s></s></div></div>`);
  }
}

class StatusBar extends ShadowBox {
  connectedCallback() {
    this.paint(`
      :host { display: block; height: 30px; box-sizing: border-box; background: #d8ffff; padding: 2px 2px 1px 2px; border-bottom: 1px solid #5a7a76; }
      div { height: 26px; box-sizing: border-box; border: 1px solid #000; background: #b0ffff; box-shadow: inset 1px 1px 0 #fff, inset -1px -2px 0 #3a8a80;
        text-align: center; font: bold 12px/27px ${FONT_MONO}; letter-spacing: -.2px; color: #101818; overflow: hidden; }
    `, `<div><slot></slot></div>`);
  }
}

class TaskStrip extends ShadowBox {
  connectedCallback() {
    this.paint(`
      :host { display: block; position: relative; height: 18px; background: #d4d0c8; border-top: 2px solid #555; box-sizing: border-box; overflow: hidden;
        font: 9px/10px "Liberation Sans", "Noto Sans CJK SC", sans-serif; color: #222; }
      span { position: absolute; top: -3px; }
      .tabs { position: absolute; left: 0; right: 0; top: 14px; height: 2px; display: flex; gap: 1px; }
      .tabs i { display: block; height: 2px; background: #f4f2ea; border-right: 1px solid #666; box-sizing: border-box; flex: none; }
    `, `
      <span style="left:12px">加工日</span><span style="left:1285px">输入</span>
      <div class="tabs"><i style="width:55px"></i><i style="width:8px;background:none;border:0"></i>${Array(21).fill(0).map((_, k) => `<i style="width:48px;${k === 14 ? "background:#555" : ""}"></i>`).join("")}<i style="width:70px;background:none"></i><i style="width:107px;background:none;border:0"></i><i style="width:168px;background:#999;border:0"></i></div>`);
  }
}

[["title-bar", TitleBar], ["menu-bar", MenuBar], ["logo-panel", LogoPanel], ["layer-row", LayerRow], ["layer-group", LayerGroup],
 ["left-panel", LeftPanel], ["graphic-canvas", GraphicCanvas], ["scroll-bar", ScrollBar], ["motif-button", MotifButton],
 ["histogram-popup", HistogramPopup], ["tool-button", ToolButton], ["tool-grid", ToolGrid], ["right-panel", RightPanel],
 ["command-bar", CommandBar], ["status-bar", StatusBar], ["task-strip", TaskStrip]]
  .forEach(([name, cls]) => customElements.define(name, cls));
</script>
</body>
</html>
